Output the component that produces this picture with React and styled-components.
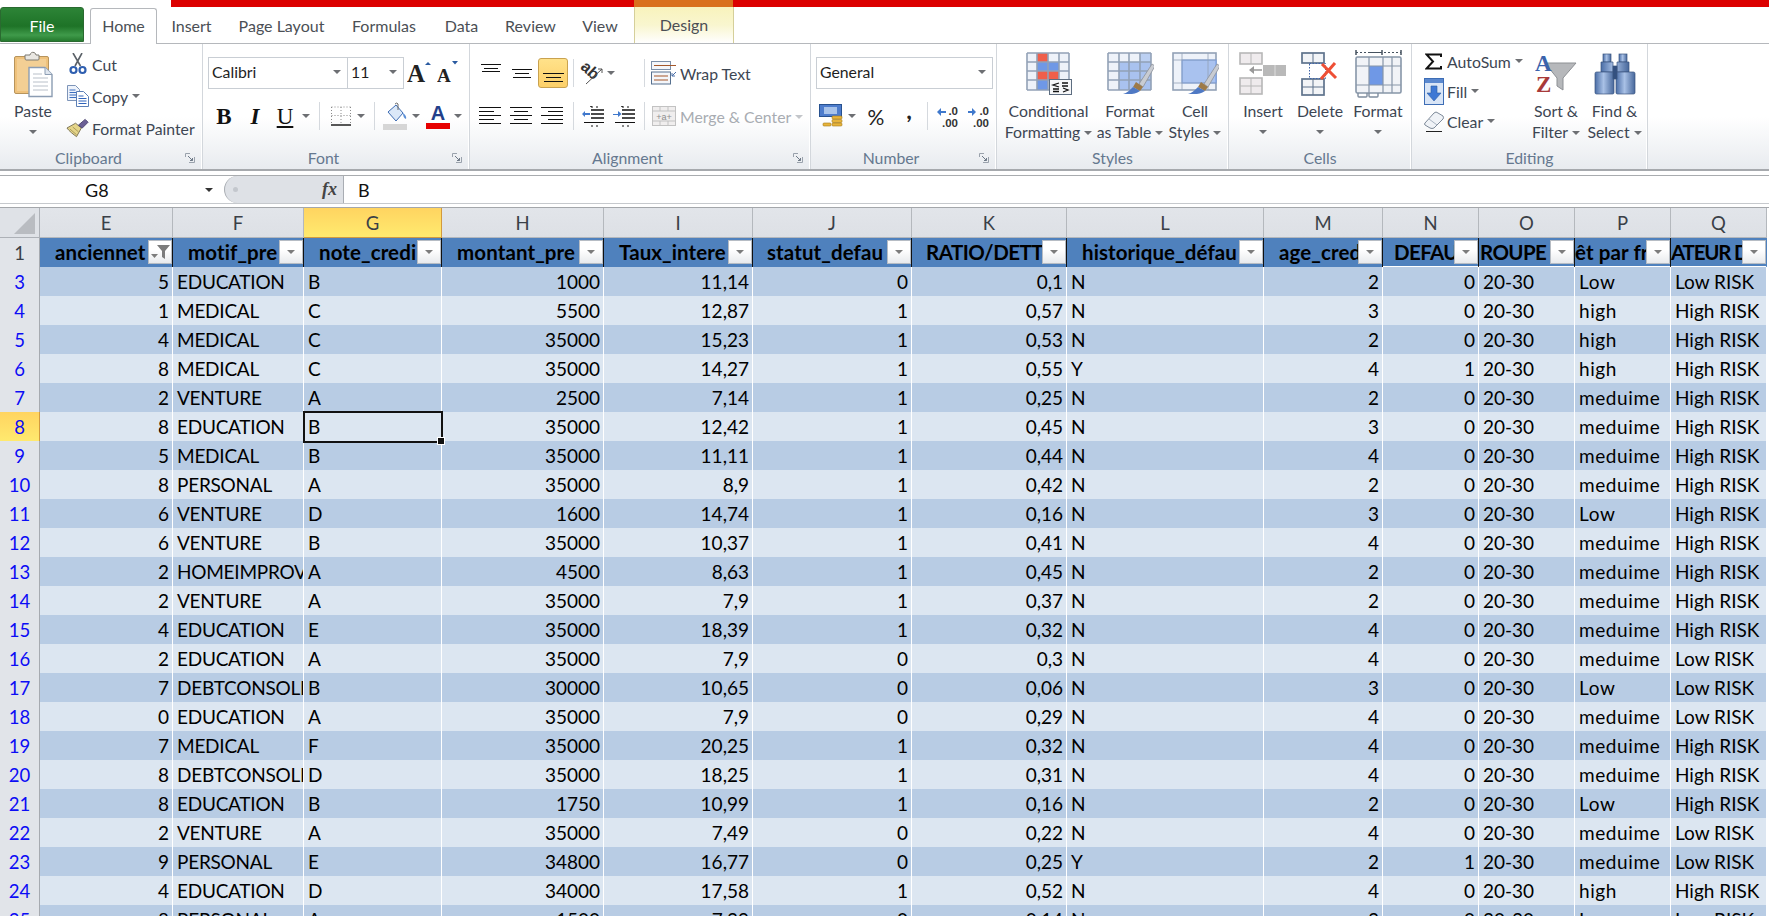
import React from "react";
import styled, { createGlobalStyle } from "styled-components";

const Global = createGlobalStyle`
  html, body { margin: 0; padding: 0; background: #fff; overflow: hidden; }
  #root { height: 916px; }
  * { box-sizing: border-box; }
`;
const UI = `"Lato", "Liberation Sans", sans-serif`;

const Page = styled.div`
  width: 1769px; height: 916px; display: flex; flex-direction: column; overflow: hidden;
  font-family: ${UI}; background: #fff; color: #3d4653;
`;
/* ---------- title strip & tabs ---------- */
const TopStrip = styled.div`display: flex; height: 7px; flex: none;`;
const StripPart = styled.div`
  flex: ${p => (p.$w ? `0 0 ${p.$w}px` : "1")};
  background: ${p => p.$c};
`;
const TabRow = styled.div`
  height: 37px; flex: none; display: flex; align-items: flex-end; border-bottom: 1px solid #b5b8bc;
  font-size: 16px;
`;
const FileTab = styled.div`
  width: 84px; height: 35px; margin: 0 6px 1px 0; display: flex; align-items: center; justify-content: center; padding-top: 2px;
  color: #fff; border-radius: 3px 3px 0 0; border: 1px solid #2a6a30;
  background: linear-gradient(#2d8437 0%, #1e7327 55%, #3f9a4a 82%, #257a2e 100%);
`;
const Tab = styled.div`
  width: ${p => p.$w}px; height: 36px; margin-bottom: -1px; display: flex; align-items: center; justify-content: center; padding-bottom: 2px;
  color: #4b4f55;
  ${p => p.$active && `background:#fff;border:1px solid #b5b8bc;border-bottom:none;border-radius:3px 3px 0 0;`}
`;
const DesignTab = styled(Tab)`
  height: 36px; margin-left: 3px; margin-bottom: 0; color: #4b4f55;
  border-left: 1px solid #d5cf9a; border-right: 1px solid #d5cf9a;
  background: linear-gradient(#f8f3bc 0%, #f9f6cf 50%, #ffffff 100%);
`;
/* ---------- ribbon ---------- */
const Ribbon = styled.div`
  height: 127px; flex: none; display: flex; border-bottom: 2px solid #a6a9ad;
  background: linear-gradient(#fff 0%, #fff 58%, #e8ebef 100%); font-size: 15.8px;
`;
const Group = styled.div`
  width: ${p => p.$w}px; flex: none; display: flex; flex-direction: column;
  border-right: 1px solid #d3d7dc; box-shadow: inset -1px 0 0 #fff;
`;
const GroupBody = styled.div`height: 101px; flex: none; display: flex; padding-left: ${p => p.$pl || 0}px;`;
const LabelRow = styled.div`height: 24px; display: flex; align-items: center; padding: 1px ${p => (p.$launcher ? 7 : 0)}px 0 0; color: #65788f;`;
const LabelText = styled.div`flex: 1; text-align: center; margin-right: ${p => (p.$launcher ? 8 : 0)}px;`;
const LauncherBox = styled.svg`width: 10px; height: 10px; flex: none;`;
const Launcher = () => (
  <LauncherBox viewBox="0 0 10 10">
    <path d="M9.5 4V9.5H4M.5 4V.5H5" fill="none" stroke="#9aa2ac" />
    <path d="M3 3L7.5 7.5M5 7.5H7.5V5" fill="none" stroke="#6f7a88" />
  </LauncherBox>
);
const Caret = styled.span`
  display: inline-block; width: 0; height: 0; flex: none;
  border-left: 4px solid transparent; border-right: 4px solid transparent;
  border-top: 4px solid ${p => p.$c || "#6d6f73"};
`;
const TextCaret = styled(Caret)`margin-left: 4px; vertical-align: 3px;`;
const BigButton = styled.div`
  width: ${p => p.$w}px; flex: none; display: flex; flex-direction: column; align-items: center; line-height: 21px; white-space: nowrap;
`;
const BigIcon = styled.div`height: 56px; flex: none; display: flex; align-items: center; justify-content: center; padding-top: 3px; padding-left: ${p => p.$pl || 0}px;`;
const CaretLine = styled.div`height: 21px; display: flex; align-items: center; justify-content: center;`;
const StackCol = styled.div`display: flex; flex-direction: column; padding-top: ${p => p.$pt || 0}px; width: ${p => p.$w}px; flex: none;`;
const StackRow = styled.div`height: ${p => p.$h}px; display: flex; align-items: center; white-space: nowrap;`;
const StackIcon = styled.div`
  width: ${p => p.$w}px; flex: none; display: flex; align-items: center; justify-content: center;
  padding-left: ${p => p.$pl || 0}px; padding-right: ${p => p.$pr || 0}px;
`;
const TwoRows = styled.div`display: flex; flex-direction: column; gap: 11px; padding-top: 13px; width: 100%;`;
const ToolRow = styled.div`height: 32px; display: flex; align-items: center; padding-left: ${p => p.$pl || 0}px; white-space: nowrap;`;
const Slot = styled.div`width: ${p => p.$w}px; height: 100%; flex: none; display: flex; align-items: center; justify-content: center; padding-bottom: ${p => p.$pb || 0}px;`;
const ActiveSlot = styled(Slot)`
  height: 30px; margin-left: 1px; border: 1px solid #c9a24f; border-radius: 3px; background: linear-gradient(#ffe28a, #fdd069);
  padding-top: 10px;
`;
const Sep = styled.div`width: 1px; height: 28px; background: #d5d9de;`;
const Select = styled.div`
  width: ${p => p.$w}px; height: 32px; flex: none; display: flex; align-items: center; justify-content: space-between; padding: 0 6px 3px 3px;
  background: #fff; border: 1px solid #c9ced4; color: #1e1e1e; margin-left: ${p => p.$ml || 0}px;
`;
const Muted = styled.span`color: ${p => p.$c || "inherit"}; display: flex; align-items: center; padding-top: 1px;`;
const SerifGlyph = styled.span`
  font-family: "Liberation Serif", serif; font-size: 23px; color: #111; font-weight: ${p => (p.$b ? 700 : 400)}; font-style: ${p => (p.$i ? "italic" : "normal")};
  text-decoration: ${p => (p.$u ? "underline" : "none")}; text-underline-offset: 2px; line-height: 1;
`;
const SansGlyph = styled.span`font-size: ${p => p.$s}px; color: #222; font-weight: ${p => p.$fw || 400}; line-height: 1;`;

/* ---------- icons ---------- */
const Lines = ({ w, h, data, c = "#111" }) => (
  <svg width={w} height={h} viewBox={`0 0 ${w} ${h}`}>
    {data.map(([a, b, y], i) => (
      <line key={i} x1={a} x2={b} y1={y + 0.5} y2={y + 0.5} stroke={c} />
    ))}
  </svg>
);
const PasteIcon = () => (
  <svg width="44" height="48" viewBox="0 0 44 48">
    <rect x="1.5" y="6.5" width="34" height="37" rx="1.5" fill="#efc27c" stroke="#b7945c" />
    <rect x="4" y="9" width="29" height="32" fill="#f3cf94" />
    <path d="M12 8V5h5a3 3 0 0 1 4-2.5A3 3 0 0 1 23 5h3v4q0 1-1 1H13q-1 0-1-2z" fill="#e9e7e2" stroke="#7d7a72" />
    <path d="M16 17.5h16l7 7v22H16z" fill="#fff" stroke="#8c9db3" strokeWidth="1.4" />
    <path d="M32 17.5v7h7" fill="#dfe6ef" stroke="#8c9db3" />
    <path d="M20 24h9M20 28h15M20 32h15M20 36h15M20 40h15" stroke="#b9c0c9" />
  </svg>
);
const CutIcon = () => (
  <svg width="18" height="22" viewBox="0 0 18 22">
    <path d="M4 0L11.5 13M13 0L6 13" stroke="#5b6168" strokeWidth="1.6" fill="none" />
    <circle cx="4.5" cy="17" r="3" fill="none" stroke="#2f5fb0" strokeWidth="2.2" />
    <circle cx="13.5" cy="17" r="3" fill="none" stroke="#2f5fb0" strokeWidth="2.2" />
  </svg>
);
const CopyIcon = () => (
  <svg width="22" height="22" viewBox="0 0 22 22">
    <path d="M.5.5h8l4 4v11H.5z" fill="#eef3fb" stroke="#7d94b8" />
    <path d="M2.5 5h6M2.5 7.5h8M2.5 10h8M2.5 12.5h8" stroke="#3c6fc0" />
    <path d="M9.5 6.5h7l5 5v10h-12z" fill="#fff" stroke="#5c7fb5" />
    <path d="M11.5 11h5M11.5 13.5h8M11.5 16h8M11.5 18.5h8" stroke="#2f63bb" />
  </svg>
);
const PainterIcon = () => (
  <svg width="24" height="20" viewBox="0 0 24 20">
    <path d="M1 10L10 5l6 5-5 9c-3-2-8-6-10-9z" fill="#e5d58a" stroke="#7a7256" />
    <path d="M4 11l7 6M7 9l6 5" stroke="#a99a58" />
    <path d="M13 7L20 1l3 3-6 6z" fill="#6b5f95" stroke="#4d4572" />
  </svg>
);
const GrowIcon = ({ size, tip, dy }) => (
  <svg width={size} height="26" viewBox={`0 0 ${size} 26`}>
    <text x="0" y={dy} fontFamily="Liberation Serif" fontWeight="700" fontSize={tip === "up" ? 25 : 19} fill="#222">A</text>
    {tip === "up"
      ? <path d={`M${size - 7} 5l3-3 3 3z`} fill="#2a5aa0" />
      : <path d={`M${size - 7} 1l3 3.500 3-3.500z`} fill="#2a5aa0" />}
  </svg>
);
const BorderIcon = () => (
  <svg width="20" height="20" viewBox="0 0 20 20">
    <path d="M.5 1H20M.5 9.500H20M.5 1V18M10 1V18M19.500 1V18" stroke="#8a8a8a" strokeDasharray="1 2" fill="none" />
    <path d="M0 19h20" stroke="#111" strokeWidth="1.4" />
  </svg>
);
const FillIcon = () => (
  <svg width="26" height="28" viewBox="0 0 26 28">
    <path d="M6 10L14 3l7 8-7 8z" fill="#dbe8f8" stroke="#3f6db3" />
    <path d="M13 2q2-2 3 0v6" fill="none" stroke="#6b6b6b" />
    <path d="M21 11q4 3 3 6-3-1-3-6z" fill="#5b8fd6" />
    <rect x="1" y="22" width="24" height="6" fill="#d6d6d6" />
  </svg>
);
const ColorIcon = () => (
  <svg width="24" height="26" viewBox="0 0 24 26">
    <text x="12" y="17" textAnchor="middle" fontFamily="Liberation Sans" fontWeight="700" fontSize="20" fill="#23408a">A</text>
    <rect x="0" y="20" width="24" height="6" fill="#e60000" />
  </svg>
);
const OrientIcon = () => (
  <svg width="24" height="24" viewBox="0 0 24 24">
    <text x="0" y="14" transform="rotate(42 9 10)" fontFamily="Liberation Sans" fontWeight="700" fontSize="16" fill="#333">ab</text>
    <path d="M6 23L22 8M18 8h4v4" fill="none" stroke="#555" />
  </svg>
);
const WrapIcon = () => (
  <svg width="26" height="24" viewBox="0 0 26 24">
    <rect x=".5" y=".5" width="19" height="8" fill="#f4f6fa" stroke="#7c8fa8" />
    <path d="M3 4.500h22" stroke="#a4572a" />
    <rect x=".5" y="11" width="19" height="12" fill="#f4f6fa" stroke="#56708f" />
    <path d="M3 15h14M3 19h14" stroke="#a4572a" />
    <path d="M25 11l-4 4M21 12v3h3" fill="none" stroke="#4a6ea8" />
  </svg>
);
const MergeIcon = () => (
  <svg width="24" height="20" viewBox="0 0 24 20">
    <rect x=".5" y=".5" width="23" height="19" fill="#f0eeee" stroke="#c2c2c2" />
    <path d="M.5 5h23M.5 15h23M8 .5v4.500M16 .5v4.500M8 15v5M16 15v5" stroke="#c2c2c2" />
    <text x="12" y="13.500" textAnchor="middle" fontFamily="Liberation Sans" fontSize="9" fill="#8d8d8d">+a+</text>
  </svg>
);
const IndentIcon = ({ flip }) => (
  <svg width="22" height="22" viewBox="0 0 22 22">
    <path d="M9 1v1M22 1v0M9 5h13M9 9h13M9 13h13" stroke="#111" strokeWidth="1.500" />
    <path d="M2 17.500h20M9 21h2M14 21h2" stroke="#111" />
    <path d="M9 2h2M14 2h2" stroke="#111" />
    {flip ? <path d="M0 9h5V6l3.500 3L5 12V10H0z" fill="#3f78cc" /> : <path d="M8 8H3V6L0 9l3 3v-2h5z" fill="#3f78cc" />}
  </svg>
);
const AccountingIcon = () => (
  <svg width="26" height="24" viewBox="0 0 26 24">
    <rect x=".5" y=".5" width="22" height="12" fill="#4d7ccc" stroke="#27518f" />
    <rect x="5" y="3" width="13" height="7" fill="#a8c3ea" />
    <rect x="13" y="12" width="10" height="3" rx="1" fill="#e7b43c" stroke="#a47a17" strokeWidth=".6" />
    <rect x="13" y="15.500" width="10" height="3" rx="1" fill="#e7b43c" stroke="#a47a17" strokeWidth=".6" />
    <rect x="13" y="19" width="10" height="3" rx="1" fill="#e7b43c" stroke="#a47a17" strokeWidth=".6" />
    <rect x="4" y="19" width="8" height="3" rx="1" fill="#e7b43c" stroke="#a47a17" strokeWidth=".6" />
  </svg>
);
const DecimalIcon = ({ inc }) => (
  <svg width="22" height="24" viewBox="0 0 22 24">
    <path d={inc ? "M0 7h4V4l4 4-4 4V9H0z" : "M9 7H4V4L0 8l4 4V9h5z"} fill="#3f78cc" />
    <text x="21" y="11" textAnchor="end" fontFamily="Liberation Sans" fontSize="11.500" fontWeight="700" fill="#333">.0</text>
    <text x="21" y="23" textAnchor="end" fontFamily="Liberation Sans" fontSize="11.500" fontWeight="700" fill="#333">.00</text>
  </svg>
);
const Brush = () => (
  <g>
    <path d="M32 32L45 12l3 2-12 21z" fill="#c9ccd2" stroke="#8c9099" strokeWidth=".8" />
    <path d="M29 30l7 5-3 4-7-4z" fill="#9d7a48" />
    <path d="M26 35l7 4c-5 4-11 3-17 3 4-1 7-4 10-7z" fill="#4f79c4" />
  </g>
);
const GridBase = ({ cols, rows, w, h, c = "#92a1b6" }) => (
  <g>
    {cols.map(x => <line key={`c${x}`} x1={x} x2={x} y1="0" y2={h} stroke={c} strokeWidth="1.6" />)}
    {rows.map(y => <line key={`r${y}`} y1={y} y2={y} x1="0" x2={w} stroke={c} strokeWidth="1.6" />)}
  </g>
);
const CondIcon = () => (
  <svg width="46" height="43" viewBox="0 0 46 43">
    <rect x="1" y="1" width="42" height="37" fill="#eef2f9" />
    <rect x="11" y="1" width="11" height="9" fill="#f05f4a" />
    <rect x="11" y="10" width="22" height="9" fill="#6f98e6" />
    <rect x="11" y="19" width="22" height="9" fill="#f05f4a" />
    <rect x="11" y="28" width="11" height="10" fill="#6f98e6" />
    <g transform="translate(1 1)"><GridBase cols={[0, 10, 21, 32, 42]} rows={[0, 9, 18, 27, 37]} w={42} h={37} /></g>
    <rect x="23.500" y="27.500" width="22" height="15" fill="#f6f7f9" stroke="#5d6d80" />
    <path d="M33 31l-6 2 6 2M27 37h6M27 39.500h6M36 31h6M36 34h6M37 36l5 2-5 2" fill="none" stroke="#111" strokeWidth="1.300" />
  </svg>
);
const TableIcon = () => (
  <svg width="47" height="44" viewBox="0 0 47 44">
    <rect x="1" y="1" width="43" height="37" fill="#eef2f9" />
    <rect x="12" y="10" width="32" height="28" fill="#a9c2ef" />
    <rect x="1" y="1" width="43" height="9" fill="#eef2f9" />
    <path d="M33 1h11v9H33z" fill="#bcd0f2" />
    <g transform="translate(1 1)"><GridBase cols={[0, 11, 21, 32, 43]} rows={[0, 9, 18, 27, 37]} w={43} h={37} /></g>
    <Brush />
  </svg>
);
const StyleIcon = () => (
  <svg width="47" height="44" viewBox="0 0 47 44">
    <rect x="1" y="1" width="43" height="37" fill="#eef2f9" stroke="#92a1b6" strokeWidth="1.600" />
    <rect x="10" y="8" width="34" height="23" fill="#a9c2ef" stroke="#6f98e6" />
    <path d="M1 8h43M10 1v37M36 1v37M1 31h43" stroke="#92a1b6" strokeWidth=".8" />
    <Brush />
  </svg>
);
const InsertIcon = () => (
  <svg width="48" height="44" viewBox="0 0 48 44">
    <g fill="#efebed" stroke="#b7b7b7" strokeWidth="1.600">
      <rect x="1" y="1" width="22" height="11" />
      <rect x="1" y="26" width="22" height="16" />
    </g>
    <path d="M12 1v11M1 34h22M12 26v16" stroke="#b7b7b7" />
    <rect x="24" y="13" width="23" height="11" fill="#b9b9b9" />
    <path d="M36 13v11" stroke="#ddd" />
    <path d="M11 18h12" stroke="#999" strokeWidth="1.500" />
    <path d="M15 14v8l-5-4z" fill="#999" />
  </svg>
);
const DeleteIcon = () => (
  <svg width="38" height="44" viewBox="0 0 38 44">
    <g fill="#f2f4f7" stroke="#5f738c" strokeWidth="1.700">
      <rect x="1" y="1" width="22" height="10" />
      <rect x="1" y="27" width="22" height="16" />
    </g>
    <path d="M12 1v10M1 35h22M12 27v16" stroke="#5f738c" />
    <rect x="8.500" y="11.500" width="16" height="15" fill="none" stroke="#3e64a8" strokeDasharray="1.500 1.500" />
    <path d="M21 12l14 14M34 11L20 27" stroke="#ee4f35" strokeWidth="3" />
  </svg>
);
const FormatIcon = () => (
  <svg width="47" height="48" viewBox="0 0 47 48">
    <path d="M1 0v5M46 0v5M27 0v5" stroke="#45525f" strokeWidth="1.500" />
    <path d="M1 2.500h45" stroke="#45525f" strokeDasharray="2 2" />
    <path d="M14 2.500h13" stroke="#45525f" />
    <rect x="1" y="7" width="45" height="36" rx="1.500" fill="#f1f3f7" stroke="#8796a8" strokeWidth="1.600" />
    <rect x="14" y="16" width="14" height="19" fill="#6f98e6" />
    <path d="M1 16h45M1 35h45M14 7v36M28 7v36M37 7v36" stroke="#8796a8" strokeWidth="1.200" />
    <path d="M3 43v3q0 1 1 1h7q1 0 1-1v-3M14 43v3q0 1 1 1h7q1 0 1-1v-3" fill="none" stroke="#7f8d9f" strokeWidth="1.400" />
  </svg>
);
const SigmaIcon = () => (
  <svg width="17" height="17" viewBox="0 0 17 17">
    <path d="M16 4V1.500H1.500L8 8.500 1.500 15.500H16V13" fill="none" stroke="#111" strokeWidth="2" />
  </svg>
);
const FillDownIcon = () => (
  <svg width="20" height="27" viewBox="0 0 20 27">
    <rect x=".5" y=".5" width="19" height="26" fill="#d9e5f6" stroke="#3d6db5" />
    <rect x="1" y="1" width="18" height="4" fill="#5a88cf" />
    <path d="M7 8h6v7h4l-7 8-7-8h4z" fill="#3e78d4" stroke="#2a5aa3" strokeWidth=".6" />
  </svg>
);
const EraserIcon = () => (
  <svg width="22" height="21" viewBox="0 0 22 21">
    <path d="M2 12L11 2q2-2 4 0l5 3q1 2 0 3l-9 9q-2 1-4 0l-5-3q-1-1 0-2z" fill="#f0f3f7" stroke="#7e8a99" />
    <path d="M6 8l8 6" stroke="#a9b4c2" />
    <path d="M3 20.500h16" stroke="#222" />
  </svg>
);
const SortIcon = () => (
  <svg width="42" height="44" viewBox="0 0 42 44">
    <path d="M10 11h31L28 26v12l-6-4v-8z" fill="#b6b8bb" stroke="#8d9094" />
    <text x="0" y="19" fontFamily="Liberation Serif" fontWeight="700" fontSize="23" fill="#3b63ac">A</text>
    <text x="1" y="40" fontFamily="Liberation Serif" fontWeight="700" fontSize="23" fill="#a83a3a">Z</text>
  </svg>
);
const BinocularIcon = () => (
  <svg width="42" height="42" viewBox="0 0 42 42">
    <defs>
      <linearGradient id="bin" x1="0" x2="1">
        <stop offset="0" stopColor="#4a6da6" /><stop offset=".45" stopColor="#a9c1e6" /><stop offset="1" stopColor="#47679b" />
      </linearGradient>
    </defs>
    <g fill="url(#bin)" stroke="#39557f" strokeWidth=".7">
      <rect x="9" y="1" width="8" height="8" />
      <rect x="25" y="1" width="8" height="8" />
      <path d="M7 9h12v10H7zM23 9h12v10H23z" />
      <rect x="1" y="19" width="19" height="22" rx="1.500" />
      <rect x="22" y="19" width="19" height="22" rx="1.500" />
      <rect x="19" y="13" width="4" height="13" fill="#33507f" />
    </g>
  </svg>
);

/* ---------- formula bar ---------- */
const FormulaWrap = styled.div`
  flex: none; background: #fff; padding-top: 4px; border-bottom: 1px solid #a4a7ab; height: 37px;
`;
const FormulaBar = styled.div`
  height: 29px; display: flex; border-top: 1px solid #a9acaf; border-bottom: 1px solid #c6c9cd; font-size: 18px; color: #111;
`;
const NameBox = styled.div`width: 224px; flex: none; display: flex; align-items: center; padding-left: 85px; justify-content: space-between; padding-right: 11px;`;
const FxPill = styled.div`
  position: relative; width: 120px; flex: none; display: flex; align-items: center; justify-content: flex-end; padding-right: 6px;
  background: #dee1e6; border: 1px solid #a9adb3; border-width: 0 1px 0 1px; border-radius: 16px 0 0 16px;
  font-family: "Liberation Serif", serif; font-style: italic; font-weight: 700; color: #444; font-size: 18px;
  &::before { content: ""; position: absolute; left: 8px; top: 11px; width: 5px; height: 5px; border-radius: 50%; background: #c3c7cd; }
`;
const FormulaInput = styled.div`flex: 1; display: flex; align-items: center; padding-left: 14px;`;

/* ---------- sheet ---------- */
const COLS = "40px 133px 131px 138px 162px 149px 159px 155px 197px 119px 96px 96px 96px 96px 2px";
const Sheet = styled.div`flex: 1; overflow: hidden; font-size: 19px; color: #000; background: #fff;`;
const LetterRow = styled.div`display: grid; grid-template-columns: ${COLS}; height: 30px;`;
const DataRow = styled.div`display: grid; grid-template-columns: ${COLS}; height: 29px; line-height: 30px;`;
const Corner = styled.div`
  background: #dfe2e7; border-right: 1px solid #adb1b7; border-bottom: 1px solid #adb1b7; display: flex; align-items: flex-end; justify-content: flex-end; padding: 0 4px 3px 0;
`;
const Triangle = styled.div`
  width: 0; height: 0; border-left: 21px solid transparent; border-bottom: 21px solid #b9bcc1;
`;
const Letter = styled.div`
  display: flex; align-items: center; justify-content: center; font-size: 18.5px; color: #3a3f47;
  border-right: 1px solid ${p => (p.$sel ? "#d29a3e" : "#b4b8bd")}; border-bottom: 1px solid ${p => (p.$sel ? "#d29a3e" : "#b4b8bd")};
  background: ${p => (p.$sel ? "linear-gradient(#ffd460,#ffea6f)" : "linear-gradient(#e2e5ea,#dde0e5)")};
`;
const RowNum = styled.div`
  display: flex; align-items: center; justify-content: center; font-size: 18.5px; color: ${p => (p.$dark ? "#3a3f47" : "#0c0cf5")};
  border-right: 1px solid ${p => (p.$sel ? "#d29a3e" : "#a6aab0")}; border-bottom: 1px solid ${p => (p.$sel ? "#d29a3e" : "#b4b8bd")};
  background: ${p => (p.$sel ? "linear-gradient(#ffd460,#ffea6f)" : "#e1e4e9")};
`;
const HeadCell = styled.div`
  position: relative; overflow: hidden; white-space: nowrap; font-weight: 700; background: #4f81bd; color: #000; font-size: 20.5px;
  padding-left: ${p => p.$pl}px; border-right: 1px solid ${p => (p.$last ? "#4f81bd" : "#111")};
  border-bottom: ${p => (p.$soft ? "3px solid #fff" : "2px solid #111")};
  line-height: 29px; letter-spacing: ${p => p.$ls}px;
`;
const FilterBtn = styled.div`
  position: absolute; right: 0; top: 2px; width: 24px; height: 24px; display: flex; align-items: center; justify-content: center;
  background: linear-gradient(#fff 40%, #e8eaed); border: 1px solid #b6bcc4;
`;
const Cell = styled.div`
  position: relative; overflow: hidden; white-space: nowrap; text-align: ${p => (p.$num ? "right" : "left")};
  padding: ${p => (p.$num ? "0 3px 0 0" : "0 0 0 4px")}; letter-spacing: ${p => p.$ls || 0}px;
  background: ${p => (p.$odd ? "#b8cce4" : "#dce6f1")}; border-right: 1px solid #fff; border-bottom: 1px solid #fff;
`;
const Blank = styled.div`background: #fff;`;
const SelFrame = styled.div`
  position: relative; z-index: 2;
  &::after { content: ""; position: absolute; inset: -1px -1px 0 -1px; border: 2px solid #111; pointer-events: none; }
  &::before { content: ""; position: absolute; right: -3px; bottom: -2px; width: 6px; height: 6px; background: #111; border: 1px solid #fff; z-index: 3; }
`;

const HEADS = [
  ["E", "anciennet", 15, 0.1], ["F", "motif_pre", 15, 0.1], ["G", "note_credi", 15, 0.1], ["H", "montant_pre", 15, 0.1],
  ["I", "Taux_intere", 15, 0.1], ["J", "statut_defau", 14, 0.1], ["K", "RATIO/DETT", 14, -0.5], ["L", "historique_défau", 15, 0.1],
  ["M", "age_cred", 15, 0.1], ["N", "DEFAU", 11, -0.6], ["O", "ROUPE", 1, -0.6], ["P", "êt par fr", 0, 0.1], ["Q", "ATEUR D", 0, -1.2],
];
const NUMERIC = [true, false, false, true, true, true, true, false, true, true, false, false, false];
const SPACING = [0, -0.25, 0, 0, 0, 0, 0, 0, 0, 0, 0, 0.6, 0];
const RAW = `3|5|EDUCATION|B|1000|11,14|0|0,1|N|2|0|Low|Low RISK
4|1|MEDICAL|C|5500|12,87|1|0,57|N|3|0|high|High RISK
5|4|MEDICAL|C|35000|15,23|1|0,53|N|2|0|high|High RISK
6|8|MEDICAL|C|35000|14,27|1|0,55|Y|4|1|high|High RISK
7|2|VENTURE|A|2500|7,14|1|0,25|N|2|0|meduime|High RISK
8|8|EDUCATION|B|35000|12,42|1|0,45|N|3|0|meduime|High RISK
9|5|MEDICAL|B|35000|11,11|1|0,44|N|4|0|meduime|High RISK
10|8|PERSONAL|A|35000|8,9|1|0,42|N|2|0|meduime|High RISK
11|6|VENTURE|D|1600|14,74|1|0,16|N|3|0|Low|High RISK
12|6|VENTURE|B|35000|10,37|1|0,41|N|4|0|meduime|High RISK
13|2|HOMEIMPROVEMENT|A|4500|8,63|1|0,45|N|2|0|meduime|High RISK
14|2|VENTURE|A|35000|7,9|1|0,37|N|2|0|meduime|High RISK
15|4|EDUCATION|E|35000|18,39|1|0,32|N|4|0|meduime|High RISK
16|2|EDUCATION|A|35000|7,9|0|0,3|N|4|0|meduime|Low RISK
17|7|DEBTCONSOLIDATION|B|30000|10,65|0|0,06|N|3|0|Low|Low RISK
18|0|EDUCATION|A|35000|7,9|0|0,29|N|4|0|meduime|Low RISK
19|7|MEDICAL|F|35000|20,25|1|0,32|N|4|0|meduime|High RISK
20|8|DEBTCONSOLIDATION|D|35000|18,25|1|0,31|N|4|0|meduime|High RISK
21|8|EDUCATION|B|1750|10,99|1|0,16|N|2|0|Low|High RISK
22|2|VENTURE|A|35000|7,49|0|0,22|N|4|0|meduime|Low RISK
23|9|PERSONAL|E|34800|16,77|0|0,25|Y|2|1|meduime|Low RISK
24|4|EDUCATION|D|34000|17,58|1|0,52|N|4|0|high|High RISK
25|8|PERSONAL|A|1500|7,29|0|0,14|N|3|0|Low|Low RISK`;
const ROWS = RAW.split("\n").map(l => {
  const p = l.split("|");
  return { n: Number(p[0]), cells: [...p.slice(1, 11), "20-30", p[11], p[12]] };
});

const FunnelGlyph = () => (
  <svg width="19" height="16" viewBox="0 0 19 16">
    <path d="M6 1h13l-5 6v8l-3-2V7z" fill="#7c7c7c" />
    <path d="M0 10l3.500 4L7 10z" fill="#7c7c7c" />
  </svg>
);

const TABS = [["Insert", 69], ["Page Layout", 111], ["Formulas", 94], ["Data", 61], ["Review", 77], ["View", 62]];

const Sheetgrid = () => (
  <Sheet>
    <LetterRow>
      <Corner><Triangle /></Corner>
      {HEADS.map(([l]) => <Letter key={l} $sel={l === "G"}>{l}</Letter>)}
      <Blank />
    </LetterRow>
    <DataRow>
      <RowNum $dark>1</RowNum>
      {HEADS.map(([l, t, pl, ls], i) => (
        <HeadCell key={l} $pl={pl} $ls={ls} $soft={i >= 9} $last={i === 12}>
          {t}
          <FilterBtn>{i === 0 ? <FunnelGlyph /> : <Caret $c="#7c7c7c" />}</FilterBtn>
        </HeadCell>
      ))}
      <Blank />
    </DataRow>
    {ROWS.map((r, ri) => (
      <DataRow key={r.n}>
        <RowNum $sel={r.n === 8}>{r.n}</RowNum>
        {r.cells.map((c, i) => {
          const cell = <Cell key={i} $odd={ri % 2 === 0} $num={NUMERIC[i]} $ls={SPACING[i]}>{c}</Cell>;
          return r.n === 8 && i === 2 ? <SelFrame key={i}>{cell}</SelFrame> : cell;
        })}
        <Blank />
      </DataRow>
    ))}
  </Sheet>
);

const Big = ({ w, icon, l1, l2, lineCaret, iconPl }) => (
  <BigButton $w={w}>
    <BigIcon $pl={iconPl}>{icon}</BigIcon>
    <div>{l1}</div>
    {l2 ? <div>{l2}{lineCaret && <TextCaret />}</div> : <CaretLine><Caret /></CaretLine>}
  </BigButton>
);

const Ribbonbar = () => (
  <Ribbon>
    <Group $w={203}>
      <GroupBody>
        <Big w={66} icon={<PasteIcon />} l1="Paste" iconPl={3} />
        <StackCol $pt={4} $w={137}>
          <StackRow $h={32}><StackIcon $w={26} $pr={3}><CutIcon /></StackIcon>Cut</StackRow>
          <StackRow $h={32}><StackIcon $w={26} $pr={3}><CopyIcon /></StackIcon>Copy<TextCaret /></StackRow>
          <StackRow $h={32}><StackIcon $w={26} $pr={3}><PainterIcon /></StackIcon>Format Painter</StackRow>
        </StackCol>
      </GroupBody>
      <LabelRow $launcher><LabelText $launcher>Clipboard</LabelText><Launcher /></LabelRow>
    </Group>

    <Group $w={267}>
      <GroupBody>
        <TwoRows>
          <ToolRow $pl={5}>
            <Select $w={140}>Calibri<Caret /></Select>
            <Select $w={57} $ml={-1}>11<Caret /></Select>
            <Slot $w={30}><GrowIcon size={25} tip="up" dy={22} /></Slot>
            <Slot $w={28}><GrowIcon size={22} tip="down" dy={22} /></Slot>
          </ToolRow>
          <ToolRow $pl={5}>
            <Slot $w={32}><SerifGlyph $b>B</SerifGlyph></Slot>
            <Slot $w={30}><SerifGlyph $i $b>I</SerifGlyph></Slot>
            <Slot $w={30}><SerifGlyph $u>U</SerifGlyph></Slot>
            <Slot $w={12}><Caret /></Slot>
            <Slot $w={14}><Sep /></Slot>
            <Slot $w={30}><BorderIcon /></Slot>
            <Slot $w={10}><Caret /></Slot>
            <Slot $w={16}><Sep /></Slot>
            <Slot $w={26}><FillIcon /></Slot>
            <Slot $w={16}><Caret /></Slot>
            <Slot $w={28}><ColorIcon /></Slot>
            <Slot $w={12}><Caret /></Slot>
          </ToolRow>
        </TwoRows>
      </GroupBody>
      <LabelRow $launcher><LabelText $launcher>Font</LabelText><Launcher /></LabelRow>
    </Group>

    <Group $w={341}>
      <GroupBody>
        <TwoRows>
          <ToolRow $pl={5}>
            <Slot $w={32}><Lines w={20} h={22} data={[[0, 20, 2], [3, 17, 6], [1, 19, 9]]} /></Slot>
            <Slot $w={30}><Lines w={20} h={22} data={[[0, 20, 7], [3, 17, 11], [1, 19, 15]]} /></Slot>
            <ActiveSlot $w={30}><Lines w={21} h={12} data={[[0, 21, 1], [3, 18, 5], [1, 20, 9]]} /></ActiveSlot>
            <Slot $w={10}><Sep /></Slot>
            <Slot $w={28}><OrientIcon /></Slot>
            <Slot $w={10}><Caret /></Slot>
            <Slot $w={24} />
            <Slot $w={8}><Sep /></Slot>
            <Slot $w={32}><WrapIcon /></Slot>
            Wrap Text
          </ToolRow>
          <ToolRow $pl={5}>
            <Slot $w={30}><Lines w={22} h={18} data={[[0, 22, 0], [0, 15, 4], [0, 22, 8], [0, 15, 12], [0, 22, 16]]} /></Slot>
            <Slot $w={32}><Lines w={22} h={18} data={[[0, 22, 0], [4, 18, 4], [0, 22, 8], [4, 18, 12], [0, 22, 16]]} /></Slot>
            <Slot $w={30}><Lines w={22} h={18} data={[[0, 22, 0], [7, 22, 4], [0, 22, 8], [7, 22, 12], [0, 22, 16]]} /></Slot>
            <Slot $w={12}><Sep /></Slot>
            <Slot $w={28}><IndentIcon /></Slot>
            <Slot $w={33}><IndentIcon flip /></Slot>
            <Slot $w={8}><Sep /></Slot>
            <Slot $w={32}><MergeIcon /></Slot>
            <Muted $c="#a8acb2">Merge &amp; Center<TextCaret $c="#c3c6ca" /></Muted>
          </ToolRow>
        </TwoRows>
      </GroupBody>
      <LabelRow $launcher><LabelText $launcher>Alignment</LabelText><Launcher /></LabelRow>
    </Group>

    <Group $w={186}>
      <GroupBody>
        <TwoRows>
          <ToolRow $pl={5}><Select $w={177}>General<Caret /></Select></ToolRow>
          <ToolRow $pl={4}>
            <Slot $w={33}><AccountingIcon /></Slot>
            <Slot $w={8}><Caret /></Slot>
            <Slot $w={40}><SansGlyph $s={21}>%</SansGlyph></Slot>
            <Slot $w={26} $pb={10}><SansGlyph $s={22} $fw={900}>,</SansGlyph></Slot>
            <Slot $w={10}><Sep /></Slot>
            <Slot $w={32}><DecimalIcon /></Slot>
            <Slot $w={30}><DecimalIcon inc /></Slot>
          </ToolRow>
        </TwoRows>
      </GroupBody>
      <LabelRow $launcher><LabelText $launcher>Number</LabelText><Launcher /></LabelRow>
    </Group>

    <Group $w={232}>
      <GroupBody $pl={3}>
        <Big w={97} icon={<CondIcon />} l1="Conditional" l2="Formatting" lineCaret />
        <Big w={66} icon={<TableIcon />} l1="Format" l2="as Table" lineCaret />
        <Big w={64} icon={<StyleIcon />} l1="Cell" l2="Styles" lineCaret />
      </GroupBody>
      <LabelRow><LabelText>Styles</LabelText></LabelRow>
    </Group>

    <Group $w={183}>
      <GroupBody $pl={6}>
        <Big w={56} icon={<InsertIcon />} l1="Insert" />
        <Big w={58} icon={<DeleteIcon />} l1="Delete" />
        <Big w={58} icon={<FormatIcon />} l1="Format" />
      </GroupBody>
      <LabelRow><LabelText>Cells</LabelText></LabelRow>
    </Group>

    <Group $w={236}>
      <GroupBody>
        <StackCol $pt={2} $w={118}>
          <StackRow $h={30}><StackIcon $w={35} $pl={8}><SigmaIcon /></StackIcon>AutoSum<TextCaret /></StackRow>
          <StackRow $h={30}><StackIcon $w={35} $pl={8}><FillDownIcon /></StackIcon>Fill<TextCaret /></StackRow>
          <StackRow $h={30}><StackIcon $w={35} $pl={8}><EraserIcon /></StackIcon>Clear<TextCaret /></StackRow>
        </StackCol>
        <Big w={52} icon={<SortIcon />} l1="Sort &" l2="Filter" lineCaret />
        <Big w={65} icon={<BinocularIcon />} l1="Find &" l2="Select" lineCaret />
      </GroupBody>
      <LabelRow><LabelText>Editing</LabelText></LabelRow>
    </Group>
  </Ribbon>
);

export default function App() {
  return (
    <Page>
      <Global />
      <TopStrip>
        <StripPart $w={171} $c="#fff" />
        <StripPart $w={463} $c="#dc0000" />
        <StripPart $w={99} $c="#d9701c" />
        <StripPart $c="#dc0000" />
      </TopStrip>
      <TabRow>
        <FileTab>File</FileTab>
        <Tab $w={67} $active>Home</Tab>
        {TABS.map(([t, w]) => <Tab key={t} $w={w}>{t}</Tab>)}
        <DesignTab $w={100}>Design</DesignTab>
      </TabRow>
      <Ribbonbar />
      <FormulaWrap>
        <FormulaBar>
          <NameBox>G8<Caret $c="#333" /></NameBox>
          <FxPill>fx</FxPill>
          <FormulaInput>B</FormulaInput>
        </FormulaBar>
      </FormulaWrap>
      <Sheetgrid />
    </Page>
  );
}
